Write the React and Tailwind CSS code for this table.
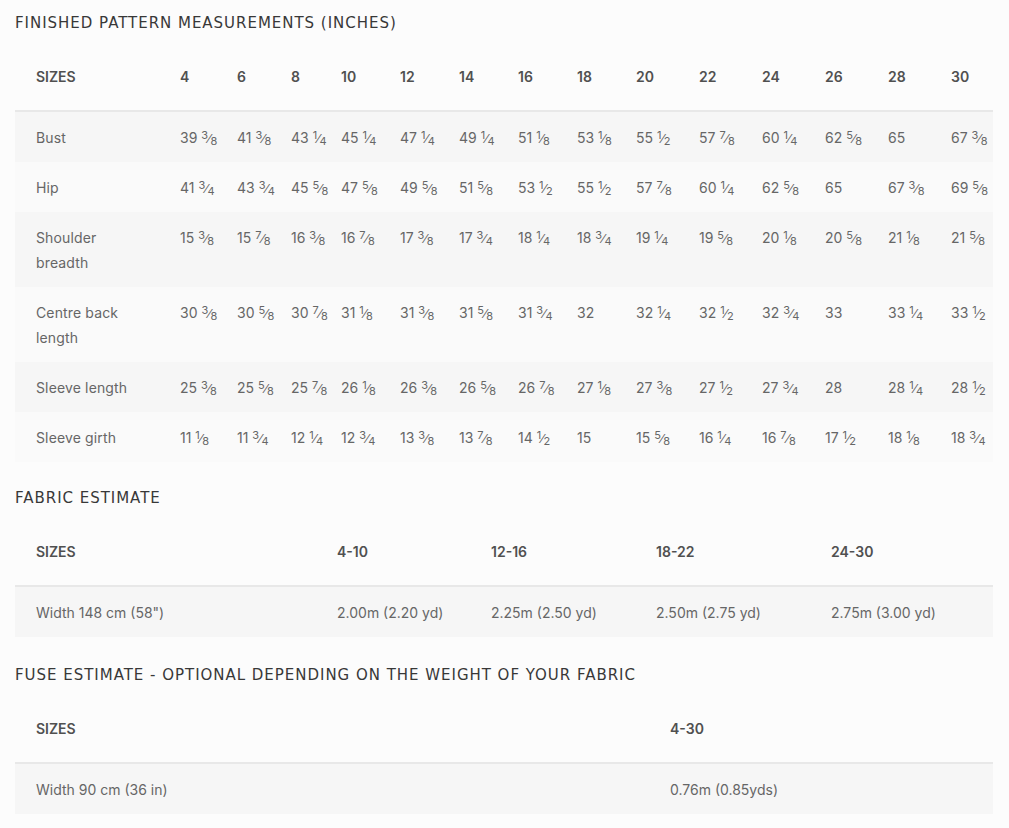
const sizes = ['4', '6', '8', '10', '12', '14', '16', '18', '20', '22', '24', '26', '28', '30']
const widths = ['w-[57px]', 'w-[54px]', 'w-[50px]', 'w-[59px]', 'w-[59px]', 'w-[59px]', 'w-[59px]', 'w-[59px]', 'w-[63px]', 'w-[63px]', 'w-[63px]', 'w-[63px]', 'w-[63px]', 'w-[42px]']

const measurements = [
  { label: ['Bust'], values: ['39 3/8', '41 3/8', '43 1/4', '45 1/4', '47 1/4', '49 1/4', '51 1/8', '53 1/8', '55 1/2', '57 7/8', '60 1/4', '62 5/8', '65', '67 3/8'] },
  { label: ['Hip'], values: ['41 3/4', '43 3/4', '45 5/8', '47 5/8', '49 5/8', '51 5/8', '53 1/2', '55 1/2', '57 7/8', '60 1/4', '62 5/8', '65', '67 3/8', '69 5/8'] },
  { label: ['Shoulder', 'breadth'], values: ['15 3/8', '15 7/8', '16 3/8', '16 7/8', '17 3/8', '17 3/4', '18 1/4', '18 3/4', '19 1/4', '19 5/8', '20 1/8', '20 5/8', '21 1/8', '21 5/8'] },
  { label: ['Centre back', 'length'], values: ['30 3/8', '30 5/8', '30 7/8', '31 1/8', '31 3/8', '31 5/8', '31 3/4', '32', '32 1/4', '32 1/2', '32 3/4', '33', '33 1/4', '33 1/2'] },
  { label: ['Sleeve length'], values: ['25 3/8', '25 5/8', '25 7/8', '26 1/8', '26 3/8', '26 5/8', '26 7/8', '27 1/8', '27 3/8', '27 1/2', '27 3/4', '28', '28 1/4', '28 1/2'] },
  { label: ['Sleeve girth'], values: ['11 1/8', '11 3/4', '12 1/4', '12 3/4', '13 3/8', '13 7/8', '14 1/2', '15', '15 5/8', '16 1/4', '16 7/8', '17 1/2', '18 1/8', '18 3/4'] },
]

const body = { fontFamily: 'Inter, "Open Sans", sans-serif' }
const heading = { fontFamily: '"DejaVu Sans", Inter, sans-serif' }

function Value({ text }) {
  const [whole, frac] = text.split(' ')
  if (!frac) return <span>{whole}</span>
  const [num, den] = frac.split('/')
  return (
    <span className="whitespace-nowrap">
      {whole}{' '}
      <span className="relative -top-[4px] text-[11px] leading-none">{num}</span>
      <span className="text-[12px] leading-none">⁄</span>
      <span className="relative top-[2px] text-[11px] leading-none">{den}</span>
    </span>
  )
}

function Heading({ children }) {
  return (
    <h2 style={heading} className="mb-[10px] h-5 text-[15px] leading-5 font-normal tracking-[0.065em] text-[#383838]">
      {children}
    </h2>
  )
}

function HeadCell({ children, className = '' }) {
  return (
    <th className={`h-[68px] p-0 text-left align-middle text-[14px] font-semibold text-[#505050] ${className}`}>
      {children}
    </th>
  )
}

function rowBg(i) {
  return i % 2 === 0 ? 'bg-[#f6f6f6]' : 'bg-[#fafafa]'
}

export default function App() {
  return (
    <div style={body} className="min-h-screen bg-[#fcfcfc] px-[15px] pt-[13px] pb-6 text-[#666666]">
      <Heading>FINISHED PATTERN MEASUREMENTS (INCHES)</Heading>
      <table className="w-[978px] table-fixed border-collapse">
        <thead>
          <tr className="border-b-2 border-[#e8e8e8]">
            <HeadCell className="w-[165px] pl-[21px]">SIZES</HeadCell>
            {sizes.map((s, i) => (
              <HeadCell key={s} className={widths[i]}>{s}</HeadCell>
            ))}
          </tr>
        </thead>
        <tbody>
          {measurements.map((row, r) => (
            <tr key={row.label.join(' ')} className={rowBg(r)}>
              <td className="py-[12.5px] pl-[21px] align-top text-[14px] leading-[25px] tracking-[0.01em]">
                {row.label.map((l) => (
                  <div key={l}>{l}</div>
                ))}
              </td>
              {row.values.map((v, i) => (
                <td key={i} className="py-[12.5px] align-top text-[14px] leading-[25px]">
                  <Value text={v} />
                </td>
              ))}
            </tr>
          ))}
        </tbody>
      </table>

      <div className="mt-[26px]">
        <Heading>FABRIC ESTIMATE</Heading>
        <table className="w-[978px] table-fixed border-collapse">
          <thead>
            <tr className="border-b-2 border-[#e8e8e8]">
              <HeadCell className="w-[322px] pl-[21px]">SIZES</HeadCell>
              <HeadCell className="w-[154px]">4-10</HeadCell>
              <HeadCell className="w-[165px]">12-16</HeadCell>
              <HeadCell className="w-[175px]">18-22</HeadCell>
              <HeadCell className="w-[162px]">24-30</HeadCell>
            </tr>
          </thead>
          <tbody>
            <tr className="bg-[#f6f6f6] text-[14px] leading-[25px]">
              <td className="py-[12.5px] pl-[21px]">Width 148 cm (58")</td>
              <td className="py-[12.5px]">2.00m (2.20 yd)</td>
              <td className="py-[12.5px]">2.25m (2.50 yd)</td>
              <td className="py-[12.5px]">2.50m (2.75 yd)</td>
              <td className="py-[12.5px]">2.75m (3.00 yd)</td>
            </tr>
          </tbody>
        </table>
      </div>

      <div className="mt-[28px]">
        <Heading>FUSE ESTIMATE - OPTIONAL DEPENDING ON THE WEIGHT OF YOUR FABRIC</Heading>
        <table className="w-[978px] table-fixed border-collapse">
          <thead>
            <tr className="border-b-2 border-[#e8e8e8]">
              <HeadCell className="w-[655px] pl-[21px]">SIZES</HeadCell>
              <HeadCell className="w-[323px]">4-30</HeadCell>
            </tr>
          </thead>
          <tbody>
            <tr className="bg-[#f6f6f6] text-[14px] leading-[25px]">
              <td className="py-[12.5px] pl-[21px]">Width 90 cm (36 in)</td>
              <td className="py-[12.5px]">0.76m (0.85yds)</td>
            </tr>
          </tbody>
        </table>
      </div>
    </div>
  )
}
